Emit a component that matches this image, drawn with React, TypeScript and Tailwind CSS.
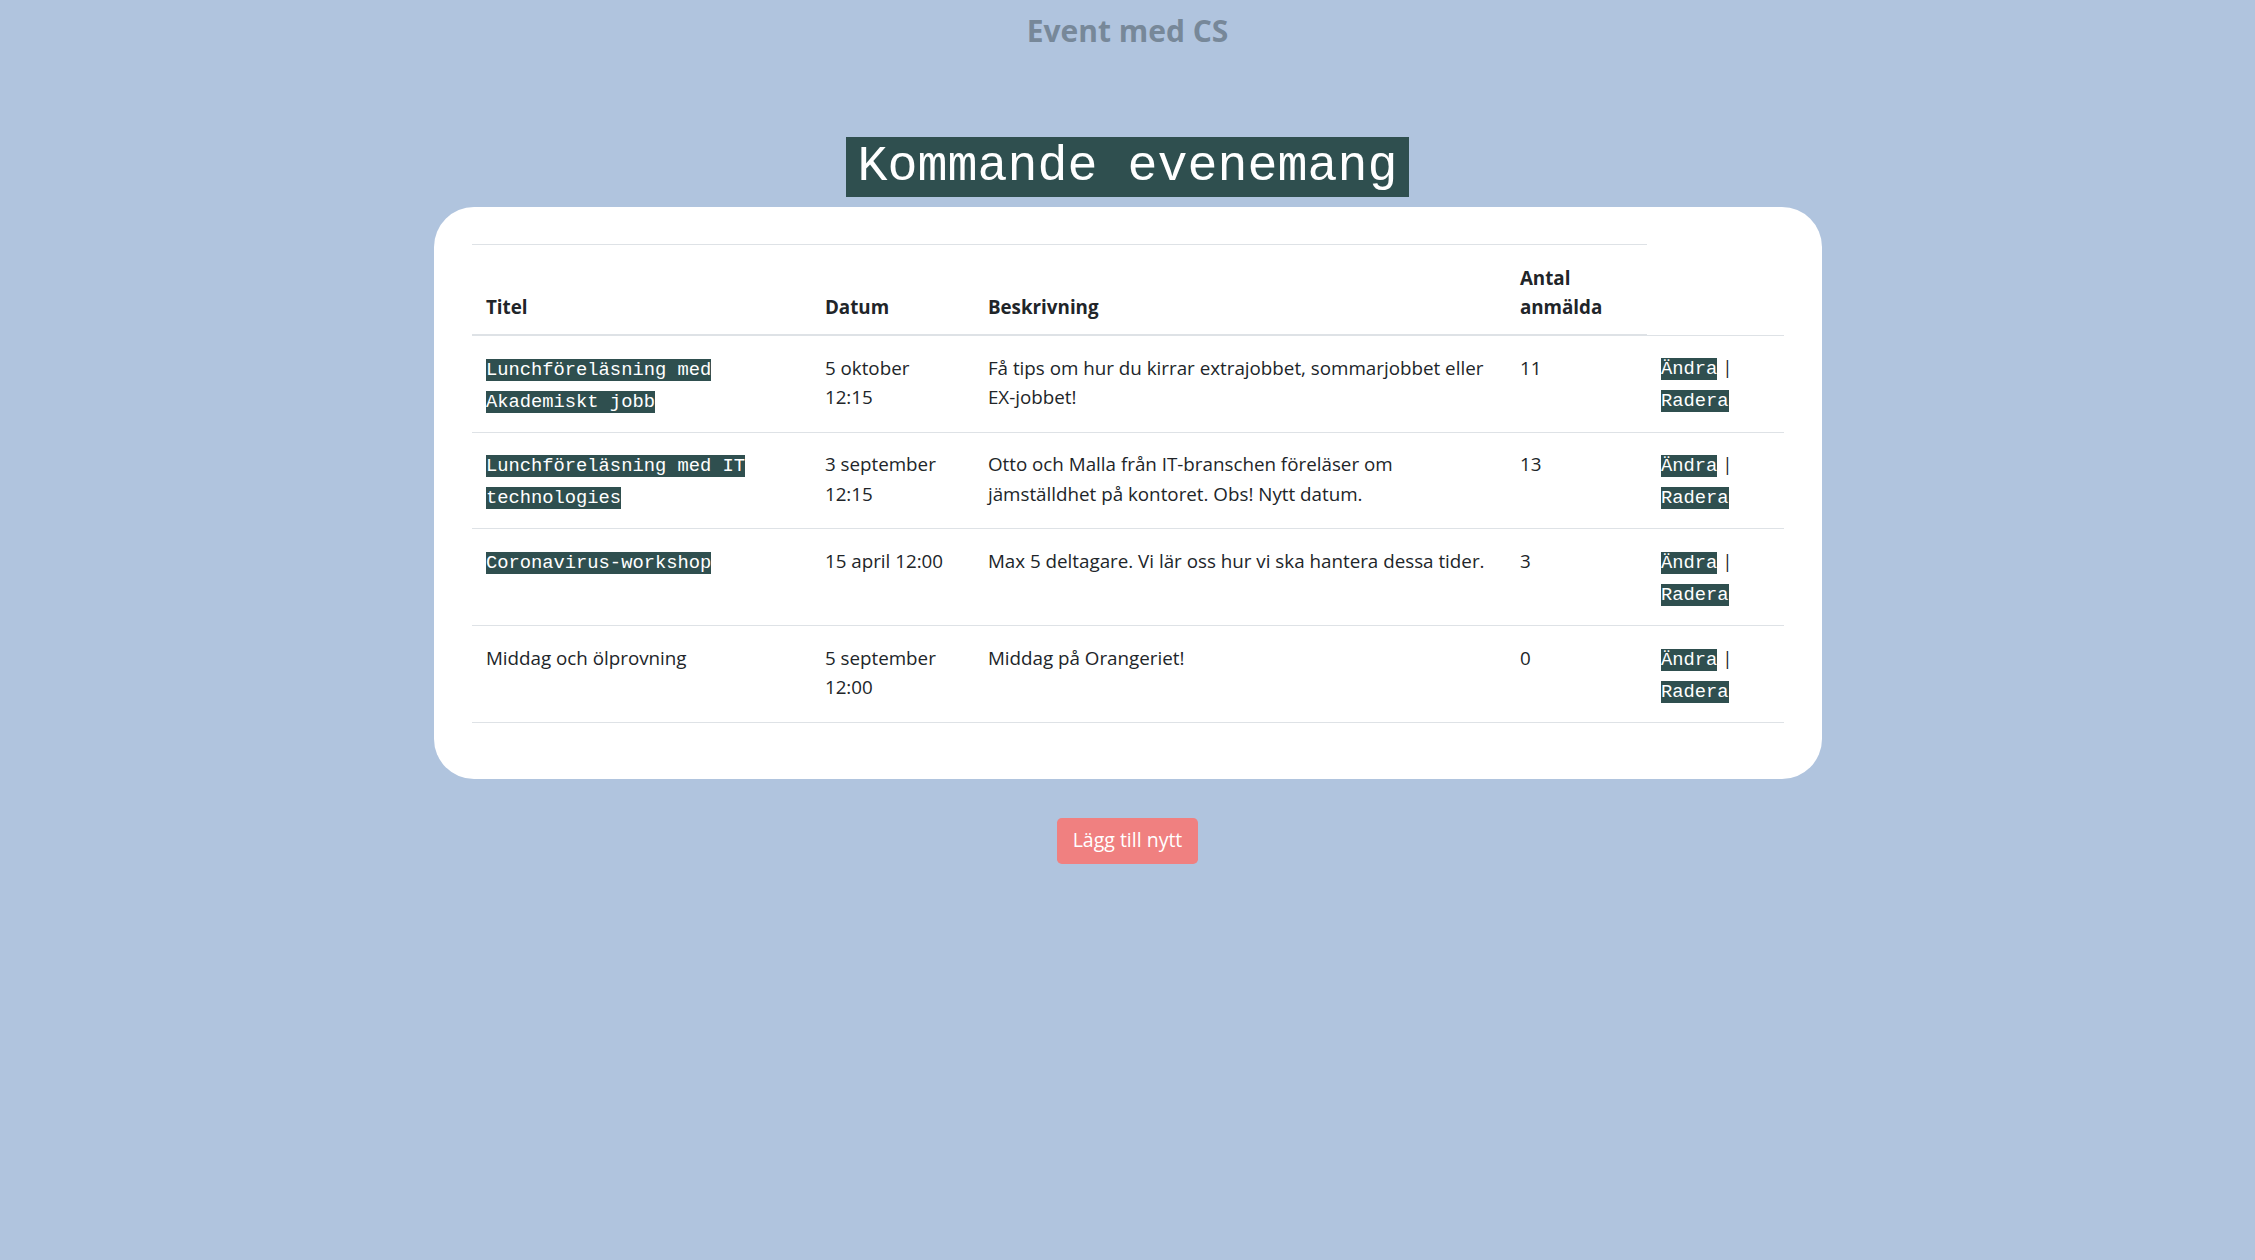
const events = [
  {
    title: "Lunchföreläsning med Akademiskt jobb",
    link: true,
    date: "5 oktober 12:15",
    desc: "Få tips om hur du kirrar extrajobbet, sommarjobbet eller EX-jobbet!",
    count: 11,
  },
  {
    title: "Lunchföreläsning med IT technologies",
    link: true,
    date: "3 september 12:15",
    desc: "Otto och Malla från IT-branschen föreläser om jämställdhet på kontoret. Obs! Nytt datum.",
    count: 13,
  },
  {
    title: "Coronavirus-workshop",
    link: true,
    date: "15 april 12:00",
    desc: "Max 5 deltagare. Vi lär oss hur vi ska hantera dessa tider.",
    count: 3,
  },
  {
    title: "Middag och ölprovning",
    link: false,
    date: "5 september 12:00",
    desc: "Middag på Orangeriet!",
    count: 0,
  },
];

const th =
  "border-t border-b-2 border-[#dee2e6] px-[14.4px] pt-[18.5px] pb-[12.5px] text-left align-bottom font-bold leading-[29px]";
const td =
  "border-t border-[#dee2e6] px-[14.4px] pt-[17.7px] pb-[14px] align-top leading-[29.6px]";
const mono =
  "bg-[#2f4f4f] text-white font-['Liberation_Mono','Courier_New',monospace] text-[18.8px] leading-[32px]";

export default function App() {
  return (
    <div className="min-h-screen bg-[#b0c4de] font-['Open_Sans',sans-serif] text-[18.8px] text-[#212529]">
      <div className="flex flex-col items-center">
        <h1 className="pt-[13px] text-[30px] font-bold leading-[36px] text-[#778899]">
          Event med CS
        </h1>

        <h2 className="mt-[88px] h-[60px] bg-[#2f4f4f] px-[11px] font-['Liberation_Mono','Courier_New',monospace] text-[50px] leading-[60px] text-white">
          Kommande evenemang
        </h2>

        <div className="mt-[10px] w-[1388px] rounded-[40px] bg-white px-[38px] pt-[37px] pb-[37px]">
          <table className="mb-[19px] w-full table-fixed border-collapse">
            <colgroup>
              <col className="w-[339px]" />
              <col className="w-[163px]" />
              <col className="w-[532px]" />
              <col className="w-[141px]" />
              <col className="w-[137px]" />
            </colgroup>
            <thead>
              <tr>
                <th className={th}>Titel</th>
                <th className={th}>Datum</th>
                <th className={th}>Beskrivning</th>
                <th className={th}>Antal anmälda</th>
              </tr>
            </thead>
            <tbody>
              {events.map((ev, i) => (
                <tr key={i} className="last:[&>td]:border-b">
                  <td className={td}>
                    {ev.link ? (
                      <a href="#" className={mono}>
                        {ev.title}
                      </a>
                    ) : (
                      ev.title
                    )}
                  </td>
                  <td className={td}>{ev.date}</td>
                  <td className={td}>{ev.desc}</td>
                  <td className={td}>{ev.count}</td>
                  <td className={td}>
                    <a href="#" className={mono}>
                      Ändra
                    </a>{" "}
                    |{" "}
                    <a href="#" className={mono}>
                      Radera
                    </a>
                  </td>
                </tr>
              ))}
            </tbody>
          </table>
        </div>

        <button className="mt-[39px] h-[46px] rounded-[4.8px] bg-[#f08080] px-[15.6px] text-[19.5px] leading-[28.8px] text-white">
          Lägg till nytt
        </button>
      </div>
    </div>
  );
}
